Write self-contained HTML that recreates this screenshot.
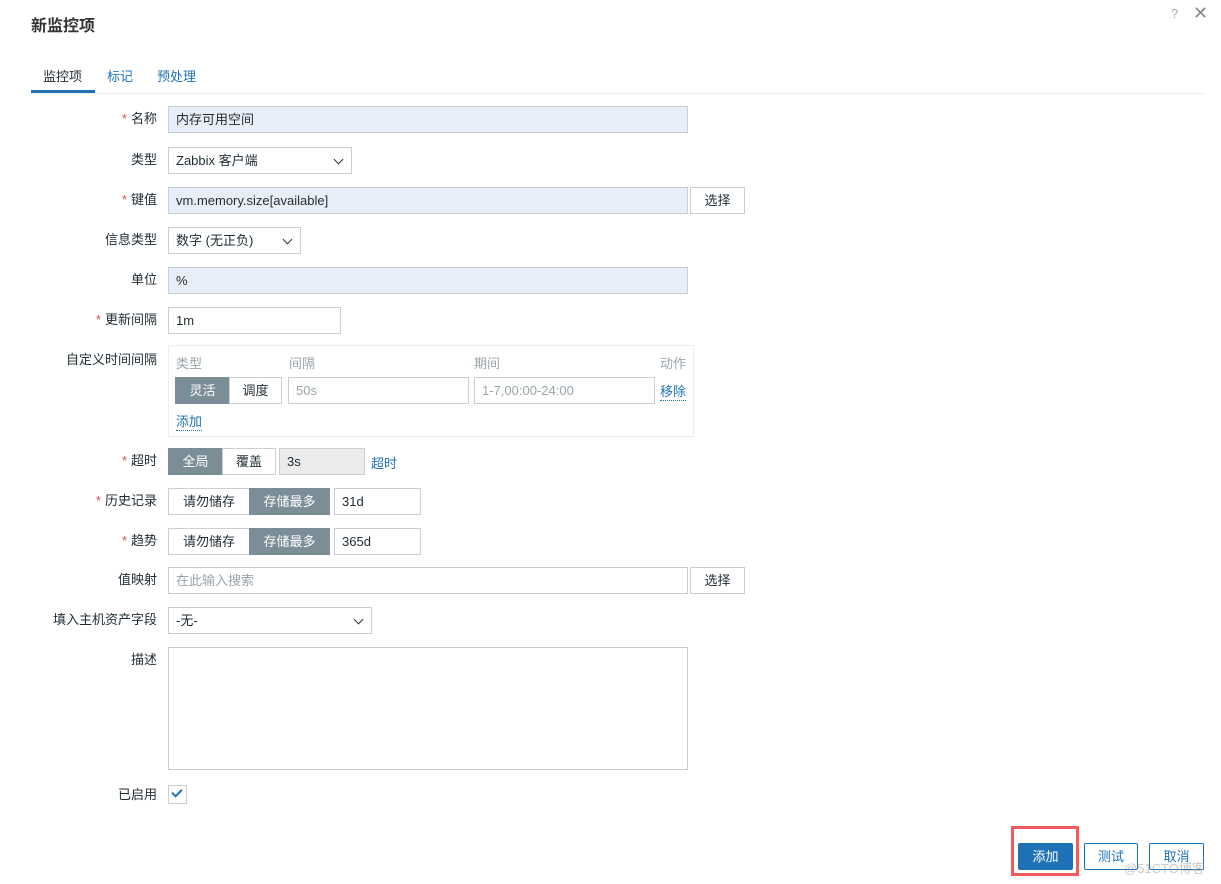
<!DOCTYPE html><html><head><meta charset="utf-8"><style>
body{margin:0;width:1221px;height:884px;background:#fff;font-family:"Liberation Sans","Noto Sans CJK SC",sans-serif;font-size:13px;color:#1f2c33;position:relative;overflow:hidden}
.a{position:absolute;box-sizing:border-box}
.l{position:absolute;right:1064px;text-align:right;white-space:nowrap;line-height:16px}
.r{color:#d64e4e;margin-right:4px}
.in{position:absolute;box-sizing:border-box;border:1px solid #c8d0d4;background:#fff;padding-left:7px;line-height:25px;height:27px;white-space:nowrap}
.bl{background:#e8eef9}
.sel:after{content:"";position:absolute;right:9px;top:8px;width:6px;height:6px;border-right:1.5px solid #333;border-bottom:1.5px solid #333;transform:rotate(45deg)}
.btn{position:absolute;box-sizing:border-box;border:1px solid #c8d0d4;background:#fff;text-align:center;line-height:25px;height:27px}
.on{background:#7b8e98;color:#fff;border-color:#7b8e98}
.lk{color:#1f72b8}
.gr{color:#9aa5ab}
</style></head><body>
<div class="a" style="left:31px;top:12px;font-size:16px;font-weight:bold;color:#333">新监控项</div>
<div class="a" style="left:1171px;top:6px;color:#aaa;font-size:13px">?</div>
<div class="a" style="left:1193px;top:3px;color:#888;font-size:18px">✕</div>
<div class="a" style="left:43px;top:66px">监控项</div>
<div class="a lk" style="left:107px;top:66px">标记</div>
<div class="a lk" style="left:157px;top:66px">预处理</div>
<div class="a" style="left:31px;top:93px;width:1174px;height:1px;background:#ebeef0"></div>
<div class="a" style="left:31px;top:90px;width:64px;height:3px;background:#1f72b8"></div>

<div class="l" style="top:111px"><span class="r">*</span>名称</div>
<div class="in bl" style="left:168px;top:106px;width:520px">内存可用空间</div>
<div class="l" style="top:152px">类型</div>
<div class="in sel" style="left:168px;top:147px;width:184px">Zabbix 客户端</div>
<div class="l" style="top:192px"><span class="r">*</span>键值</div>
<div class="in bl" style="left:168px;top:187px;width:520px">vm.memory.size[available]</div>
<div class="btn" style="left:690px;top:187px;width:55px">选择</div>
<div class="l" style="top:232px">信息类型</div>
<div class="in sel" style="left:168px;top:227px;width:133px">数字 (无正负)</div>
<div class="l" style="top:272px">单位</div>
<div class="in bl" style="left:168px;top:267px;width:520px">%</div>
<div class="l" style="top:312px"><span class="r">*</span>更新间隔</div>
<div class="in" style="left:168px;top:307px;width:173px">1m</div>
<div class="l" style="top:352px">自定义时间间隔</div>
<div class="a" style="left:168px;top:345px;width:526px;height:92px;border:1px solid #ebeef0"></div>
<div class="a gr" style="left:176px;top:353px">类型</div>
<div class="a gr" style="left:289px;top:353px">间隔</div>
<div class="a gr" style="left:474px;top:353px">期间</div>
<div class="a gr" style="left:660px;top:353px">动作</div>
<div class="btn on" style="left:175px;top:377px;width:55px">灵活</div>
<div class="btn" style="left:229px;top:377px;width:53px">调度</div>
<div class="in gr" style="left:288px;top:377px;width:181px">50s</div>
<div class="in gr" style="left:474px;top:377px;width:181px">1-7,00:00-24:00</div>
<div class="a lk" style="left:660px;top:381px;border-bottom:1px dotted #1f72b8">移除</div>
<div class="a lk" style="left:176px;top:411px;border-bottom:1px dotted #1f72b8">添加</div>
<div class="l" style="top:453px"><span class="r">*</span>超时</div>
<div class="btn on" style="left:168px;top:448px;width:55px">全局</div>
<div class="btn" style="left:222px;top:448px;width:54px">覆盖</div>
<div class="in" style="left:279px;top:448px;width:86px;background:#ebebeb">3s</div>
<div class="a lk" style="left:371px;top:453px">超时</div>
<div class="l" style="top:493px"><span class="r">*</span>历史记录</div>
<div class="btn" style="left:168px;top:488px;width:82px">请勿储存</div>
<div class="btn on" style="left:249px;top:488px;width:81px">存储最多</div>
<div class="in" style="left:334px;top:488px;width:87px">31d</div>
<div class="l" style="top:533px"><span class="r">*</span>趋势</div>
<div class="btn" style="left:168px;top:528px;width:82px">请勿储存</div>
<div class="btn on" style="left:249px;top:528px;width:81px">存储最多</div>
<div class="in" style="left:334px;top:528px;width:87px">365d</div>
<div class="l" style="top:572px">值映射</div>
<div class="in gr" style="left:168px;top:567px;width:520px">在此输入搜索</div>
<div class="btn" style="left:690px;top:567px;width:55px">选择</div>
<div class="l" style="top:612px">填入主机资产字段</div>
<div class="in sel" style="left:168px;top:607px;width:204px">-无-</div>
<div class="l" style="top:652px">描述</div>
<div class="in" style="left:168px;top:647px;width:520px;height:123px"></div>
<div class="l" style="top:787px">已启用</div>
<div class="a" style="left:168px;top:785px;width:19px;height:19px;border:1px solid #c8d0d4"></div>
<div class="a" style="left:174px;top:787px;width:6px;height:10px;border-right:2px solid #1f72b8;border-bottom:2px solid #1f72b8;transform:rotate(45deg)"></div>
<div class="a" style="left:1011px;top:826px;width:68px;height:50px;border:3px solid #f25b5b"></div>
<div class="btn" style="left:1018px;top:843px;width:55px;background:#1f72b8;color:#fff;border-color:#1f72b8;border-radius:2px">添加</div>
<div class="btn" style="left:1084px;top:843px;width:54px;color:#1f72b8;border-color:#1f72b8;border-radius:2px">测试</div>
<div class="btn" style="left:1149px;top:843px;width:55px;color:#1f72b8;border-color:#1f72b8;border-radius:2px">取消</div>
<div class="a" style="left:1124px;top:858px;color:rgba(150,150,150,.5);font-size:13px">@51CTO博客</div>
</body></html>
